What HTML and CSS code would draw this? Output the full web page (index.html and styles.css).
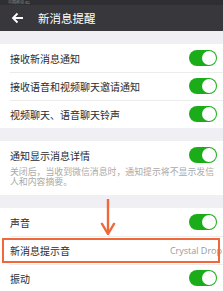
FILE: index.html
```html
<!DOCTYPE html>
<html lang="zh">
<head>
<meta charset="utf-8">
<link rel="stylesheet" href="styles.css">
</head>
<body>
<div class="topbar">
  <div class="status">中国移动 4G</div>
  <div class="header">
    <svg class="back" width="13" height="12" viewBox="0 0 13 12"><path d="M12 6H2M6.5 1.5L2 6l4.5 4.5" fill="none" stroke="#fff" stroke-width="1.8"/></svg>
    <span class="title">新消息提醒</span>
  </div>
</div>

<div class="group">
  <div class="row"><span class="label">接收新消息通知</span><span class="toggle"></span></div>
  <div class="row"><span class="label">接收语音和视频聊天邀请通知</span><span class="toggle"></span></div>
  <div class="row"><span class="label">视频聊天、语音聊天铃声</span><span class="toggle"></span></div>
</div>

<div class="group">
  <div class="row detail">
    <div class="detail-head"><span class="label">通知显示消息详情</span><span class="toggle"></span></div>
    <p class="desc">关闭后，当收到微信消息时，通知提示将不显示发信人和内容摘要。</p>
  </div>
</div>

<div class="group">
  <div class="row"><span class="label">声音</span><span class="toggle"></span></div>
  <div class="row highlight"><span class="label">新消息提示音</span><span class="value">Crystal Drop</span></div>
  <div class="row"><span class="label">振动</span><span class="toggle"></span></div>
  <svg class="arrow" width="16" height="36" viewBox="0 0 16 36"><path d="M8 0V33" stroke="#f0673a" stroke-width="2.4"/><path d="M1.5 24L8 35L14.5 24" fill="none" stroke="#f0673a" stroke-width="2.4"/></svg>
</div>
</body>
</html>
```

FILE: styles.css
```css
html, body {
  margin: 0;
  padding: 0;
}
body {
  width: 223px;
  height: 291px;
  overflow: hidden;
  background: #efeff4;
  font-family: "Noto Sans CJK SC", "Noto Sans", sans-serif;
  color: #333;
}
.topbar {
  background: #37373c;
}
.status {
  height: 5px;
  font-size: 4px;
  line-height: 5px;
  color: #888;
  padding-left: 8px;
  background: #2f2f33;
}
.header {
  height: 26px;
  display: flex;
  align-items: center;
}
.back {
  margin-left: 11px;
}
.title {
  color: #fff;
  font-size: 11.5px;
  margin-left: 14px;
}
.group {
  background: #fff;
  margin-top: 13px;
  position: relative;
}
.row {
  height: 28px;
  display: flex;
  align-items: center;
  justify-content: space-between;
  padding: 0 6px 0 10px;
  position: relative;
}
.row + .row::before {
  content: "";
  position: absolute;
  left: 10px;
  right: 0;
  top: 0;
  border-top: 1px solid #ececec;
}
.label {
  font-size: 10px;
  color: #2b2b2b;
}
.toggle {
  width: 28px;
  height: 16px;
  border-radius: 8px;
  background: #1aad19;
  position: relative;
}
.toggle::after {
  content: "";
  position: absolute;
  right: 1px;
  top: 1px;
  width: 14px;
  height: 14px;
  border-radius: 50%;
  background: #fff;
}
.detail {
  height: auto;
  display: block;
  padding-top: 6px;
  padding-bottom: 8px;
}
.detail-head {
  display: flex;
  align-items: center;
  justify-content: space-between;
}
.desc {
  margin: 4px -4px 0 0;
  font-size: 8.9px;
  line-height: 10px;
  color: #aaa;
}
.value {
  font-size: 9px;
  color: #999;
  margin-right: -5px;
  font-family: "Open Sans", "Noto Sans", sans-serif;
}
.highlight::after {
  content: "";
  position: absolute;
  left: 2px;
  right: 3px;
  top: 2px;
  bottom: 1px;
  border: 2.5px solid #f0673a;
}
.arrow {
  position: absolute;
  left: 100px;
  top: -9px;
}
```
